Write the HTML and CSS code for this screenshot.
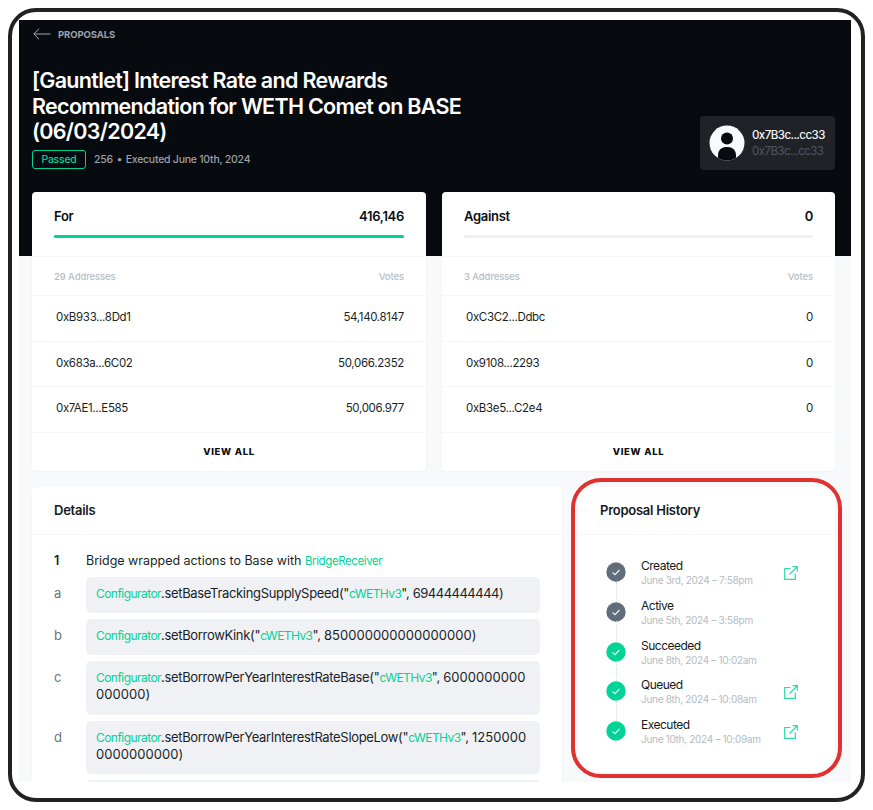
FILE: index.html
```html
<!DOCTYPE html>
<html lang="en">
<head>
<meta charset="utf-8">
<title>Proposal</title>
<link rel="stylesheet" href="styles.css">
</head>
<body>
<div class="frame">
  <main class="app">
    <header class="hero">
      <a class="back"><svg class="back-icon" viewBox="0 0 18 12"><path d="M17.5 6H1M6 .8 .8 6 6 11.2"/></svg>PROPOSALS</a>
      <div class="hero-main">
        <div>
          <h1>[Gauntlet] Interest Rate and Rewards Recommendation for WETH Comet on BASE (06/03/2024)</h1>
          <div class="meta"><span class="pill">Passed</span><span>256</span><span class="dot">•</span><span>Executed June 10th, 2024</span></div>
        </div>
        <div class="author">
          <svg class="avatar" viewBox="0 0 36 36"><defs><clipPath id="av"><circle cx="18" cy="18" r="17.5"/></clipPath></defs><circle cx="18" cy="18" r="17.5" fill="#f9fafb"/><g clip-path="url(#av)" fill="#070a0e"><circle cx="18" cy="13.5" r="6"/><rect x="9" y="22" width="18" height="18" rx="8"/></g></svg>
          <div class="author-text"><div class="a1">0x7B3c...cc33</div><div class="a2">0x7B3c...cc33</div></div>
        </div>
      </div>
    </header>
    <div class="content">
      <div class="votes">
        <section class="card vote">
          <div class="vote-head">
            <div class="vote-title"><span>For</span><span>416,146</span></div>
            <div class="bar"><div class="fill"></div></div>
          </div>
          <div class="row colhead"><span>29 Addresses</span><span>Votes</span></div>
          <div class="row"><span class="addr">0xB933...8Dd1</span><span>54,140.8147</span></div>
          <div class="row"><span class="addr">0x683a...6C02</span><span>50,066.2352</span></div>
          <div class="row"><span class="addr">0x7AE1...E585</span><span>50,006.977</span></div>
          <div class="viewall">VIEW ALL</div>
        </section>
        <section class="card vote">
          <div class="vote-head">
            <div class="vote-title"><span>Against</span><span>0</span></div>
            <div class="bar"></div>
          </div>
          <div class="row colhead"><span>3 Addresses</span><span>Votes</span></div>
          <div class="row"><span class="addr">0xC3C2...Ddbc</span><span>0</span></div>
          <div class="row"><span class="addr">0x9108...2293</span><span>0</span></div>
          <div class="row"><span class="addr">0xB3e5...C2e4</span><span>0</span></div>
          <div class="viewall">VIEW ALL</div>
        </section>
      </div>
      <div class="lower">
        <section class="card details">
          <h2 class="card-title">Details</h2>
          <div class="details-body">
            <div class="action-title"><span class="num">1</span><span>Bridge wrapped actions to Base with <a class="green">BridgeReceiver</a></span></div>
            <div class="step"><span class="letter">a</span><div class="code"><span class="green">Configurator</span>.setBaseTrackingSupplySpeed("<span class="green">cWETHv3</span>", <span class="fours">69444444444)</span></div></div>
            <div class="step"><span class="letter">b</span><div class="code"><span class="green">Configurator</span>.setBorrowKink("<span class="green">cWETHv3</span>", <span class="zeros">850000000000000000)</span></div></div>
            <div class="step"><span class="letter">c</span><div class="code"><span class="green">Configurator</span>.setBorrowPerYearInterestRateBase("<span class="green">cWETHv3</span>", <span class="zeros">6000000000000000)</span></div></div>
            <div class="step"><span class="letter">d</span><div class="code"><span class="green">Configurator</span>.setBorrowPerYearInterestRateSlopeLow("<span class="green">cWETHv3</span>", <span class="zeros">12500000000000000)</span></div></div>
            <div class="step"><span class="letter"></span><div class="code code-empty"></div></div>
          </div>
        </section>
        <section class="card history">
          <h2 class="card-title">Proposal History</h2>
          <ol class="timeline">
            <li class="tl grey"><svg class="check" viewBox="0 0 20 20"><circle cx="10" cy="10" r="9.7"/><path d="M6.5 10.4 8.9 12.6 13.5 8"/></svg><div class="tl-text"><div class="tl-name">Created</div><div class="tl-date">June 3rd, 2024 – 7:58pm</div></div><svg class="ext" viewBox="0 0 14 14"><path d="M6.5 2.5H.7v10.8h10.6V7.5M5.5 8.5 13 1M8.6.7h4.7v4.7"/></svg></li>
            <li class="tl grey"><svg class="check" viewBox="0 0 20 20"><circle cx="10" cy="10" r="9.7"/><path d="M6.5 10.4 8.9 12.6 13.5 8"/></svg><div class="tl-text"><div class="tl-name">Active</div><div class="tl-date">June 5th, 2024 – 3:58pm</div></div></li>
            <li class="tl"><svg class="check" viewBox="0 0 20 20"><circle cx="10" cy="10" r="9.7"/><path d="M6.5 10.4 8.9 12.6 13.5 8"/></svg><div class="tl-text"><div class="tl-name">Succeeded</div><div class="tl-date">June 8th, 2024 – 10:02am</div></div></li>
            <li class="tl"><svg class="check" viewBox="0 0 20 20"><circle cx="10" cy="10" r="9.7"/><path d="M6.5 10.4 8.9 12.6 13.5 8"/></svg><div class="tl-text"><div class="tl-name">Queued</div><div class="tl-date">June 8th, 2024 – 10:08am</div></div><svg class="ext" viewBox="0 0 14 14"><path d="M6.5 2.5H.7v10.8h10.6V7.5M5.5 8.5 13 1M8.6.7h4.7v4.7"/></svg></li>
            <li class="tl"><svg class="check" viewBox="0 0 20 20"><circle cx="10" cy="10" r="9.7"/><path d="M6.5 10.4 8.9 12.6 13.5 8"/></svg><div class="tl-text"><div class="tl-name">Executed</div><div class="tl-date">June 10th, 2024 – 10:09am</div></div><svg class="ext" viewBox="0 0 14 14"><path d="M6.5 2.5H.7v10.8h10.6V7.5M5.5 8.5 13 1M8.6.7h4.7v4.7"/></svg></li>
          </ol>
        </section>
        <div class="highlight"></div>
      </div>
    </div>
  </main>
</div>
</body>
</html>
```
FILE: styles.css
```css
* { box-sizing: border-box; }
html, body { margin: 0; height: 100%; overflow: hidden; background: #fff; }
body { font-family: Inter, "Liberation Sans", sans-serif; color: #0a0e14; }
.frame { width: 857px; height: 794px; margin: 8px 0 0 8px; border: 4px solid #222; border-radius: 28px; padding: 8px 10px 16px 7px; }
.app { width: 832px; height: 762px; overflow: hidden; background: #f8f9fb; }
.hero { height: 236px; background: #070a0e; padding: 0 16px 0 13px; }
.back { display: flex; align-items: center; gap: 7px; height: 28px; font-size: 9.5px; font-weight: 700; color: #9ca3ab; letter-spacing: -0.1px; }
.back-icon { width: 18px; height: 12px; fill: none; stroke: #a3a9af; stroke-width: 1; margin: 0 0 0 1px; }
.hero-main { display: flex; justify-content: space-between; align-items: flex-end; padding-top: 20px; }
h1 { margin: 0; width: 445px; font-size: 21.5px; line-height: 25.5px; font-weight: 600; letter-spacing: -0.7px; color: #fff; }
.meta { display: flex; align-items: center; margin-top: 5px; font-size: 10.5px; font-weight: 500; letter-spacing: -0.25px; color: #9aa1a9; }
.pill { width: 54px; height: 19px; border: 1px solid #00d395; border-radius: 3px; color: #00d395; display: flex; align-items: center; justify-content: center; margin-right: 8px; }
.dot { margin: 0 3.5px 0 4px; }
.author { width: 135px; height: 54px; background: #1f2227; border-radius: 4px; display: flex; align-items: center; padding-left: 9px; gap: 7px; margin-bottom: -1px; }
.avatar { width: 36px; height: 36px; flex: none; }
.author-text { font-size: 11.5px; line-height: 16px; letter-spacing: -0.55px; }
.a1 { color: #f4f5f6; font-weight: 500; }
.a2 { color: #4f5761; }
.content { padding: 0 16px 0 13px; margin-top: -64px; }
.votes { display: grid; grid-template-columns: 394px 393px; gap: 16px; }
.card { background: #fff; border-radius: 4px; box-shadow: 0 1px 3px rgba(30,40,60,.04); }
.vote-head { height: 64px; padding: 16px 22px 0; }
.vote-title { display: flex; justify-content: space-between; font-size: 13px; line-height: 16px; font-weight: 600; letter-spacing: -0.3px; }
.bar { height: 3px; margin-top: 11px; background: #eff1f4; border-radius: 2px; }
.fill { height: 100%; background: #00d395; border-radius: 2px; }
.row { display: flex; justify-content: space-between; align-items: center; height: 45.5px; padding: 0 22px 2px 24px; border-top: 1px solid #f6f7f9; font-size: 11.5px; letter-spacing: -0.33px; color: #1a1f26; }
.colhead { height: 39px; padding: 0 22px; font-size: 9.5px; font-weight: 500; color: #b4bdc6; letter-spacing: -0.1px; }
.viewall { height: 39px; border-top: 1px solid #f6f7f9; display: flex; align-items: center; justify-content: center; font-size: 9.5px; font-weight: 800; letter-spacing: 0.7px; padding-bottom: 1px; }
.lower { position: relative; display: grid; grid-template-columns: 530px 257px; gap: 16px; margin-top: 16px; align-items: start; }
.card-title { margin: 0; height: 48px; display: flex; align-items: center; padding-left: 22px; border-bottom: 1px solid #f6f7f9; font-size: 13px; font-weight: 600; letter-spacing: -0.25px; color: #141a21; }
.details { height: 320px; }
.details-body { padding: 17px 22px 0; }
.action-title { display: flex; font-size: 12.5px; line-height: 17px; letter-spacing: -0.03px; color: #1a1f26; margin-bottom: 7px; }
.num { width: 32px; flex: none; font-weight: 600; }
.green { color: #00d395; }
.action-title .green { font-size: 11.5px; letter-spacing: -0.4px; }
.step { display: flex; margin-bottom: 6px; }
.letter { width: 32px; flex: none; font-size: 13px; line-height: 33px; color: #6b7580; }
.code { width: 454px; padding: 8px 10px 11px; background: #f0f1f5; border-radius: 5px; font-size: 13px; line-height: 17.3px; letter-spacing: -0.33px; color: #1a1f26; word-break: break-all; }
.code .green { font-size: 12px; letter-spacing: -0.55px; }
.code .fours { letter-spacing: -0.5px; }
.code .zeros { letter-spacing: 0.04px; }
.code-empty { height: 36px; }
.history { height: 285px; }
.timeline { list-style: none; margin: 0; padding: 18px 0 0 28px; }
.tl { position: relative; display: flex; align-items: center; height: 39.7px; }
.check { width: 20px; height: 20px; flex: none; margin-right: 15px; }
.check circle { fill: #00d395; }
.check path { fill: none; stroke: #e8f8f2; stroke-width: 1.2; }
.grey .check circle { fill: #626d7c; }
.tl:not(:last-child)::after { content: ""; position: absolute; left: 9.5px; top: 29px; height: 20px; border-left: 1px dotted #d2dde0; }
.tl-text { width: 143px; padding-top: 2px; }
.tl-name { font-size: 12px; line-height: 14px; letter-spacing: -0.5px; color: #141a21; }
.tl-date { font-size: 10px; line-height: 14px; letter-spacing: -0.3px; color: #b4bbc3; }
.ext { width: 14px; height: 14px; fill: none; stroke: #2adba6; stroke-width: 1.2; margin-top: 2px; }
.highlight { position: absolute; left: 539px; top: -9px; width: 271px; height: 300px; border: 4px solid #e03131; border-radius: 30px; }
```
